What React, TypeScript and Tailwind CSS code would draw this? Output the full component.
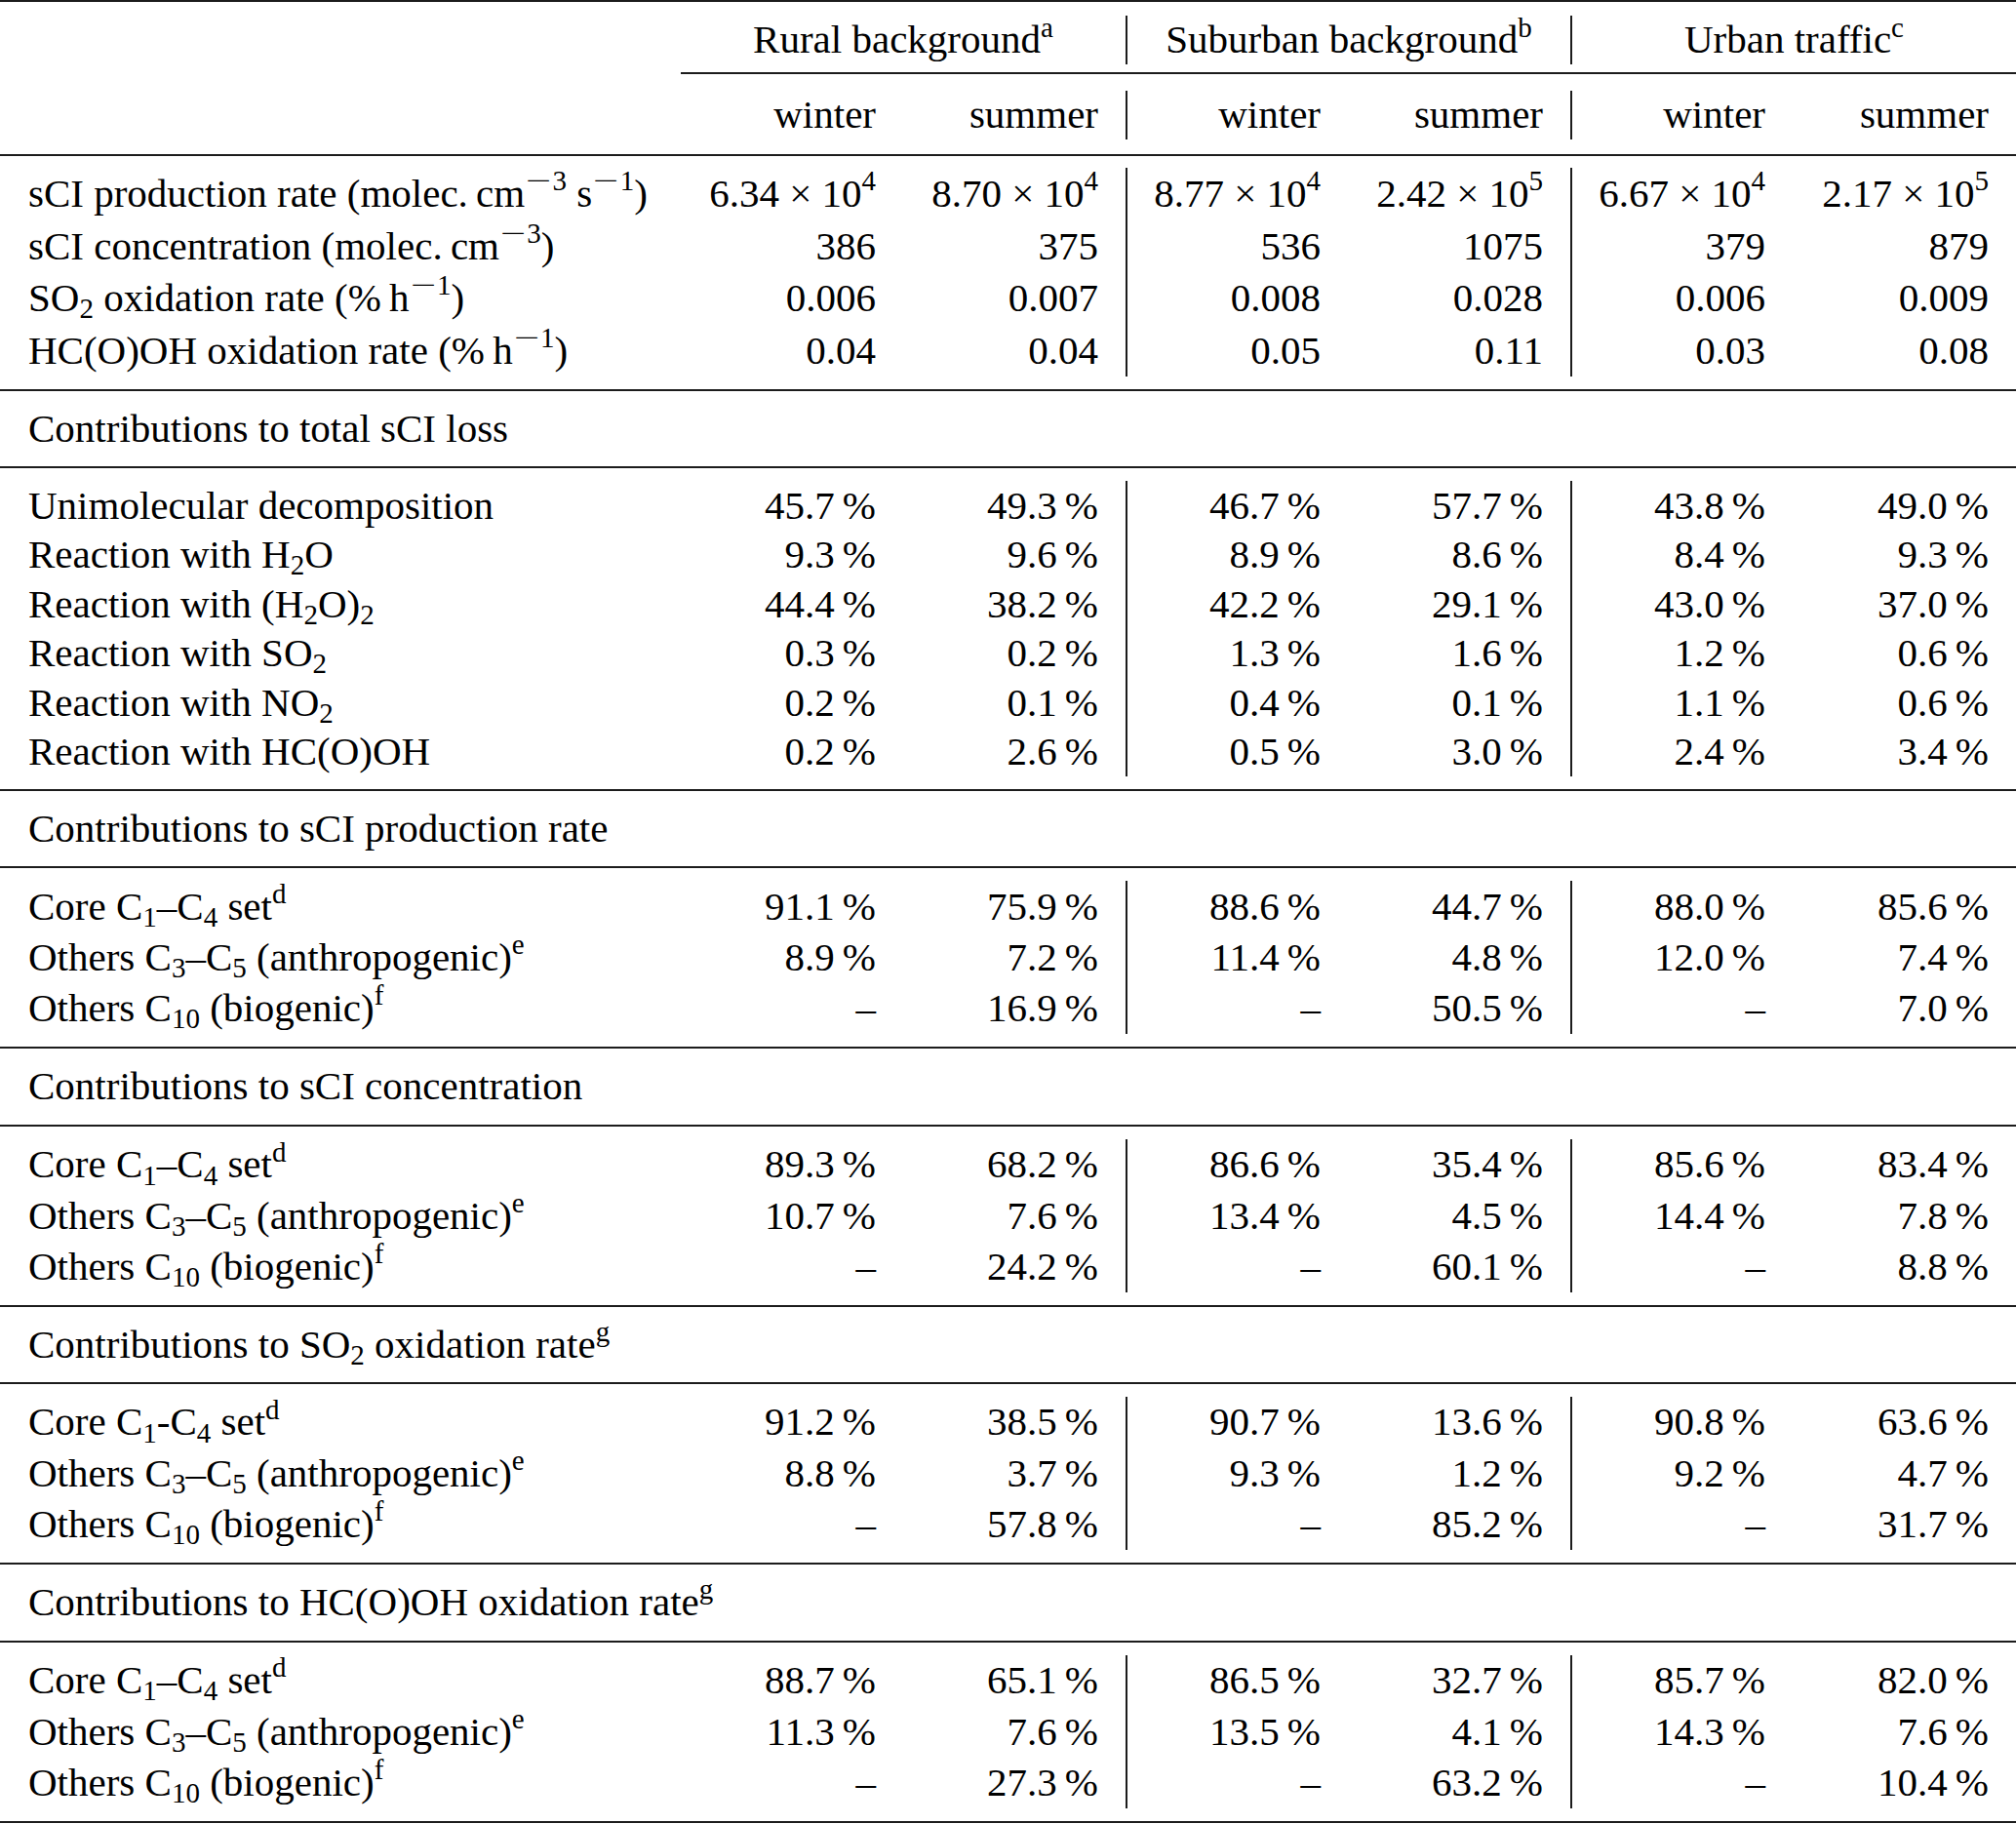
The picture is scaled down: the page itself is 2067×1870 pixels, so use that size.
import React from "react";

type N = React.ReactNode;

function Sup({ children }: { children: N }) {
  return <sup className="-top-[0.58em] text-[29px]">{children}</sup>;
}
function Sub({ children }: { children: N }) {
  return <sub className="text-[29px]">{children}</sub>;
}
function Minus() {
  return <span className="mx-[6px] inline-block scale-x-[1.6]">−</span>;
}

const sci = (m: string, e: string): N => (
  <>
    {m} × 10<Sup>{e}</Sup>
  </>
);

const pct = (v: string): N => (v === "–" ? "–" : `${v}\u2009%`);

function Row({ label, values, h }: { label: N; values: N[]; h: string }) {
  return (
    <div className={`grid grid-cols-[698px_228px_228px_228px_228px_228px_229px] ${h}`}>
      <div className="flex items-center pl-[29px]">
        <span className="whitespace-nowrap">{label}</span>
      </div>
      {values.map((v, i) => (
        <div
          key={i}
          className={`flex items-center justify-end pr-[28px] ${
            i === 2 || i === 4 ? "border-l-2 border-[#1c1c1c]" : ""
          }`}
        >
          <span className="whitespace-nowrap">{v}</span>
        </div>
      ))}
    </div>
  );
}

function Title({ children, h }: { children: N; h: string }) {
  return (
    <div className={`flex items-center border-b-2 border-[#1c1c1c] pl-[29px] ${h}`}>
      <span className="whitespace-nowrap">{children}</span>
    </div>
  );
}

function Section({ children }: { children: N }) {
  return <div className="border-b-2 border-[#1c1c1c] pt-[13px] pb-[13px]">{children}</div>;
}

const coreLabel = (dash: string): N => (
  <>
    Core C<Sub>1</Sub>
    {dash}C<Sub>4</Sub> set<Sup>d</Sup>
  </>
);
const othersLabel: N = (
  <>
    Others C<Sub>3</Sub>–C<Sub>5</Sub> (anthropogenic)<Sup>e</Sup>
  </>
);
const biogLabel: N = (
  <>
    Others C<Sub>10</Sub> (biogenic)<Sup>f</Sup>
  </>
);

function ThreeRows({ dash, rows }: { dash: string; rows: string[][] }) {
  const labels = [coreLabel(dash), othersLabel, biogLabel];
  return (
    <Section>
      {rows.map((r, i) => (
        <Row key={i} h="h-[52.3px]" label={labels[i]} values={r.map(pct)} />
      ))}
    </Section>
  );
}

export default function App() {
  const topRows: { label: N; values: N[] }[] = [
    {
      label: (
        <>
          sCI production rate (molec.{"\u2009"}cm
          <Sup>
            <Minus />3
          </Sup>
          {" "}s
          <Sup>
            <Minus />1
          </Sup>
          )
        </>
      ),
      values: [
        sci("6.34", "4"),
        sci("8.70", "4"),
        sci("8.77", "4"),
        sci("2.42", "5"),
        sci("6.67", "4"),
        sci("2.17", "5"),
      ],
    },
    {
      label: (
        <>
          sCI concentration (molec.{"\u2009"}cm
          <Sup>
            <Minus />3
          </Sup>
          )
        </>
      ),
      values: ["386", "375", "536", "1075", "379", "879"],
    },
    {
      label: (
        <>
          SO<Sub>2</Sub> oxidation rate (%{"\u2009"}h
          <Sup>
            <Minus />1
          </Sup>
          )
        </>
      ),
      values: ["0.006", "0.007", "0.008", "0.028", "0.006", "0.009"],
    },
    {
      label: (
        <>
          HC(O)OH oxidation rate (%{"\u2009"}h
          <Sup>
            <Minus />1
          </Sup>
          )
        </>
      ),
      values: ["0.04", "0.04", "0.05", "0.11", "0.03", "0.08"],
    },
  ];

  const lossRows: { label: N; values: string[] }[] = [
    { label: "Unimolecular decomposition", values: ["45.7", "49.3", "46.7", "57.7", "43.8", "49.0"] },
    {
      label: (
        <>
          Reaction with H<Sub>2</Sub>O
        </>
      ),
      values: ["9.3", "9.6", "8.9", "8.6", "8.4", "9.3"],
    },
    {
      label: (
        <>
          Reaction with (H<Sub>2</Sub>O)<Sub>2</Sub>
        </>
      ),
      values: ["44.4", "38.2", "42.2", "29.1", "43.0", "37.0"],
    },
    {
      label: (
        <>
          Reaction with SO<Sub>2</Sub>
        </>
      ),
      values: ["0.3", "0.2", "1.3", "1.6", "1.2", "0.6"],
    },
    {
      label: (
        <>
          Reaction with NO<Sub>2</Sub>
        </>
      ),
      values: ["0.2", "0.1", "0.4", "0.1", "1.1", "0.6"],
    },
    { label: "Reaction with HC(O)OH", values: ["0.2", "2.6", "0.5", "3.0", "2.4", "3.4"] },
  ];

  return (
    <div className="min-h-screen w-[2067px] bg-white font-['Liberation_Serif','Times_New_Roman',serif] text-[41px] leading-[1.2] text-black">
      {/* Header */}
      <div className="border-t-2 border-b-2 border-[#1c1c1c]">
        <div className="flex">
          <div className="w-[698px] shrink-0" />
          <div className="flex-1">
            <div className="grid h-[74px] grid-cols-[456px_456px_457px] border-b-2 border-[#1c1c1c]">
              {[
                <>
                  Rural background<Sup>a</Sup>
                </>,
                <>
                  Suburban background<Sup>b</Sup>
                </>,
                <>
                  Urban traffic<Sup>c</Sup>
                </>,
              ].map((t, i) => (
                <div
                  key={i}
                  className={`mt-[14px] flex h-[50px] items-center justify-center ${
                    i > 0 ? "border-l-2 border-[#1c1c1c]" : ""
                  }`}
                >
                  <span className="whitespace-nowrap">{t}</span>
                </div>
              ))}
            </div>
            <div className="grid h-[82px] grid-cols-[228px_228px_228px_228px_228px_229px]">
              {["winter", "summer", "winter", "summer", "winter", "summer"].map((t, i) => (
                <div
                  key={i}
                  className={`mt-[17px] flex h-[50px] items-center justify-end pr-[28px] ${
                    i === 2 || i === 4 ? "border-l-2 border-[#1c1c1c]" : ""
                  }`}
                >
                  {t}
                </div>
              ))}
            </div>
          </div>
        </div>
      </div>

      {/* Top data */}
      <div className="border-b-2 border-[#1c1c1c] pt-[12px] pb-[13px]">
        {topRows.map((r, i) => (
          <Row key={i} h="h-[53.5px]" label={r.label} values={r.values} />
        ))}
      </div>

      <Title h="h-[79px]">Contributions to total sCI loss</Title>
      <Section>
        {lossRows.map((r, i) => (
          <Row key={i} h="h-[50.5px]" label={r.label} values={r.values.map(pct)} />
        ))}
      </Section>

      <Title h="h-[79px]">Contributions to sCI production rate</Title>
      <ThreeRows
        dash="–"
        rows={[
          ["91.1", "75.9", "88.6", "44.7", "88.0", "85.6"],
          ["8.9", "7.2", "11.4", "4.8", "12.0", "7.4"],
          ["–", "16.9", "–", "50.5", "–", "7.0"],
        ]}
      />

      <Title h="h-[80px]">Contributions to sCI concentration</Title>
      <ThreeRows
        dash="–"
        rows={[
          ["89.3", "68.2", "86.6", "35.4", "85.6", "83.4"],
          ["10.7", "7.6", "13.4", "4.5", "14.4", "7.8"],
          ["–", "24.2", "–", "60.1", "–", "8.8"],
        ]}
      />

      <Title h="h-[79px]">
        <>
          Contributions to SO<Sub>2</Sub> oxidation rate<Sup>g</Sup>
        </>
      </Title>
      <ThreeRows
        dash="-"
        rows={[
          ["91.2", "38.5", "90.7", "13.6", "90.8", "63.6"],
          ["8.8", "3.7", "9.3", "1.2", "9.2", "4.7"],
          ["–", "57.8", "–", "85.2", "–", "31.7"],
        ]}
      />

      <Title h="h-[80px]">
        <>
          Contributions to HC(O)OH oxidation rate<Sup>g</Sup>
        </>
      </Title>
      <ThreeRows
        dash="–"
        rows={[
          ["88.7", "65.1", "86.5", "32.7", "85.7", "82.0"],
          ["11.3", "7.6", "13.5", "4.1", "14.3", "7.6"],
          ["–", "27.3", "–", "63.2", "–", "10.4"],
        ]}
      />
    </div>
  );
}
